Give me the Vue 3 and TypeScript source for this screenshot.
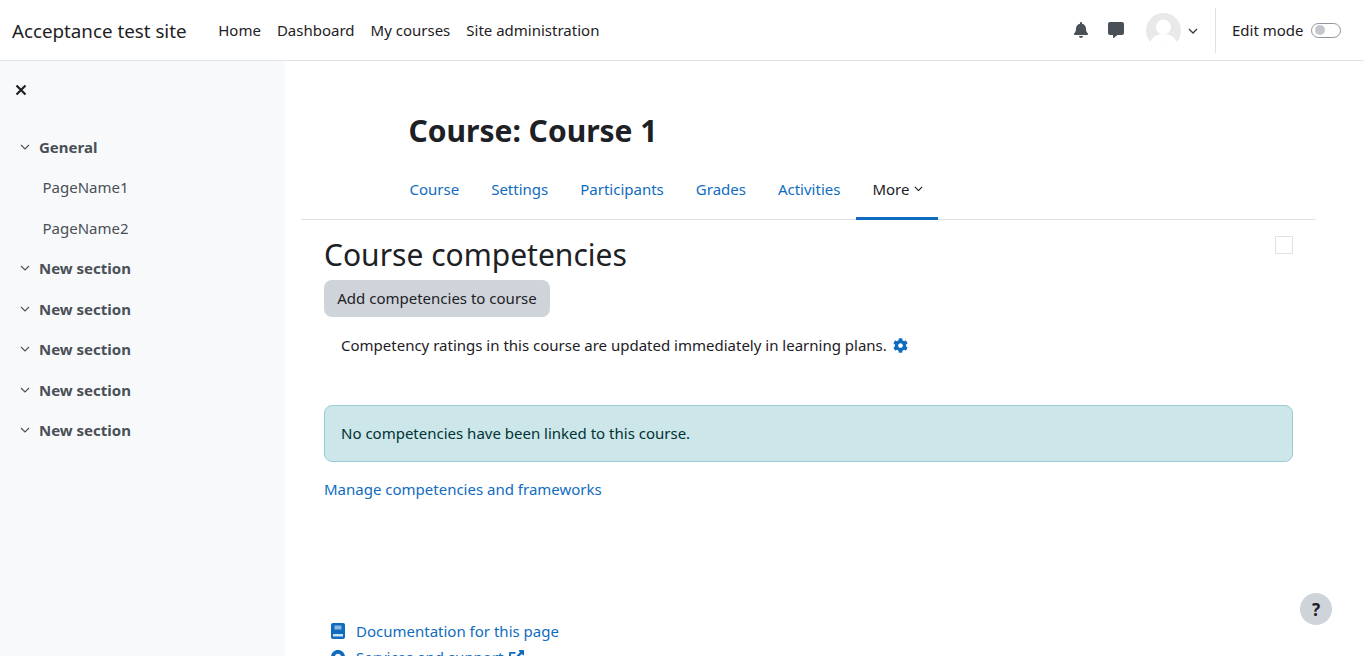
<template>
  <div class="page">
    <nav class="navbar">
      <span class="brand">Acceptance test site</span>
      <ul class="primary">
        <li v-for="item in primaryNav" :key="item">{{ item }}</li>
      </ul>
      <div class="usernav">
        <svg class="nav-icon bell" viewBox="0 0 448 512"><path fill="#495057" d="M224 512c35.3 0 64-28.7 64-64H160c0 35.3 28.7 64 64 64zm215.4-149.7c-19.3-20.8-55.5-52-55.5-154.3 0-77.700-54.500-139.900-127.900-155.200V32c0-17.700-14.300-32-32-32s-32 14.300-32 32v20.800C118.600 68.100 64.100 130.300 64.100 208c0 102.300-36.200 133.500-55.500 154.300-6 6.500-8.700 14.200-8.600 21.700.100 16.400 13 32 32.100 32h383.800c19.100 0 32-15.600 32.100-32 .100-7.500-2.600-15.300-8.600-21.700z"/></svg>
        <svg class="nav-icon chat" viewBox="0 0 512 512"><path fill="#495057" d="M448 0H64C28.700 0 0 28.700 0 64v288c0 35.300 28.700 64 64 64h96v84c0 9.800 11.200 15.500 19.100 9.700L304 416h144c35.300 0 64-28.700 64-64V64c0-35.300-28.700-64-64-64z"/></svg>
        <svg class="avatar" viewBox="0 0 35 35">
          <circle cx="17.500" cy="17.500" r="17.500" fill="#e9e9e9" />
          <circle cx="17.500" cy="14" r="7.500" fill="#fff" />
          <path fill="#fff" d="M4 30c2-6 7-9 13.500-9S29 24 31 30c-3.500 3.500-8.200 5-13.500 5S7.500 33.500 4 30z" />
        </svg>
        <svg class="chev user-chev" viewBox="0 0 10 6"><path d="M1 1l4 4 4-4" fill="none" stroke="#343a40" stroke-width="1.300" /></svg>
        <div class="divider"></div>
        <span class="edit-label">Edit mode</span>
        <span class="switch"><span class="knob"></span></span>
      </div>
    </nav>

    <div class="layout">
      <aside class="drawer">
        <svg class="close" viewBox="0 0 12 12"><path d="M1.500 1.500l9 9M10.500 1.500l-9 9" stroke="#1d2125" stroke-width="2.200" fill="none" /></svg>
        <ul class="index">
          <template v-for="section in sections" :key="section.id">
            <li class="section">
              <svg class="chev" viewBox="0 0 10 6"><path d="M1 1l4 4 4-4" fill="none" stroke="#495057" stroke-width="1.100" /></svg>
              {{ section.name }}
            </li>
            <li v-for="page in section.pages" :key="page" class="page-link">{{ page }}</li>
          </template>
        </ul>
      </aside>

      <main class="main">
        <h1 class="course-title">Course: Course 1</h1>
        <ul class="tabs">
          <li v-for="tab in tabs" :key="tab">{{ tab }}</li>
          <li class="active">
            More
            <svg class="chev more-chev" viewBox="0 0 10 6"><path d="M1 1l4 4 4-4" fill="none" stroke="#1d2125" stroke-width="1.300" /></svg>
          </li>
        </ul>

        <section class="content">
          <span class="block-check"></span>
          <h2 class="heading">Course competencies</h2>
          <button class="btn">Add competencies to course</button>
          <p class="ratings">
            Competency ratings in this course are updated immediately in learning plans.
            <svg class="cog" viewBox="0 0 512 512"><path fill="#0f6cbf" d="M487.400 315.700l-42.600-24.600c4.300-23.200 4.300-47 0-70.200l42.600-24.600c4.900-2.800 7.100-8.600 5.500-14-11.100-35.600-30-67.800-54.700-94.600-3.800-4.100-10-5.100-14.800-2.300L380.800 110c-17.900-15.400-38.500-27.300-60.800-35.100V25.800c0-5.600-3.900-10.500-9.400-11.700-36.700-8.200-74.300-7.800-109.200 0-5.500 1.200-9.400 6.100-9.400 11.700V75c-22.200 7.900-42.800 19.800-60.800 35.100L88.700 85.500c-4.900-2.800-11-1.900-14.800 2.300-24.700 26.700-43.600 58.900-54.700 94.600-1.700 5.400.600 11.200 5.500 14L67.300 221c-4.300 23.200-4.300 47 0 70.200l-42.600 24.600c-4.900 2.800-7.100 8.600-5.500 14 11.100 35.600 30 67.800 54.700 94.600 3.800 4.100 10 5.100 14.800 2.300l42.600-24.600c17.900 15.400 38.500 27.300 60.800 35.100v49.200c0 5.600 3.900 10.500 9.400 11.700 36.700 8.200 74.300 7.800 109.200 0 5.500-1.200 9.400-6.100 9.400-11.700v-49.200c22.200-7.900 42.800-19.800 60.800-35.100l42.600 24.600c4.900 2.800 11 1.900 14.800-2.300 24.700-26.700 43.600-58.900 54.700-94.600 1.500-5.500-.700-11.300-5.600-14.100zM256 336c-44.100 0-80-35.900-80-80s35.900-80 80-80 80 35.900 80 80-35.900 80-80 80z"/></svg>
          </p>
          <div class="alert">No competencies have been linked to this course.</div>
          <a class="manage">Manage competencies and frameworks</a>
        </section>

        <footer class="foot">
          <a class="foot-link">
            <svg class="foot-icon" viewBox="0 0 14 16">
              <path fill="#0f6cbf" d="M2 0h10a2 2 0 0 1 2 2v12a2 2 0 0 1-2 2H2a2 2 0 0 1-2-2V2a2 2 0 0 1 2-2z" />
              <rect x="3.500" y="2.500" width="7" height="4" fill="#8dbae0" />
              <rect x="2" y="11" width="10" height="2.500" fill="#cfe2f3" />
            </svg>
            Documentation for this page
          </a>
          <a class="foot-link">
            <svg class="foot-icon" viewBox="0 0 512 512"><path fill="#0f6cbf" d="M256 0C115 0 0 115 0 256v64h140v-64c0-64 52-116 116-116s116 52 116 116v64h140v-64C512 115 397 0 256 0zM120 300v160c0 28 22 52 52 52h168c30 0 52-24 52-52V300H120z"/></svg>
            Services and support
            <svg class="ext" viewBox="0 0 512 512"><path fill="#0f6cbf" d="M432 320h-32a16 16 0 0 0-16 16v112H64V128h144a16 16 0 0 0 16-16V80a16 16 0 0 0-16-16H48a48 48 0 0 0-48 48v352a48 48 0 0 0 48 48h352a48 48 0 0 0 48-48V336a16 16 0 0 0-16-16zM488 0H360c-21.400 0-32 25.900-17 41l35.700 35.700L135 320.400a24 24 0 0 0 0 34.100l22.500 22.500a24 24 0 0 0 34.100 0L435.300 133.300 471 169c15 15 41 4.500 41-17V24a24 24 0 0 0-24-24z"/></svg>
          </a>
        </footer>

        <button class="help">?</button>
      </main>
    </div>
  </div>
</template>

<script setup lang="ts">
interface Section {
  id: number;
  name: string;
  pages: string[];
}

const primaryNav: string[] = ['Home', 'Dashboard', 'My courses', 'Site administration'];
const tabs: string[] = ['Course', 'Settings', 'Participants', 'Grades', 'Activities'];

const sections: Section[] = [
  { id: 1, name: 'General', pages: ['PageName1', 'PageName2'] },
  { id: 2, name: 'New section', pages: [] },
  { id: 3, name: 'New section', pages: [] },
  { id: 4, name: 'New section', pages: [] },
  { id: 5, name: 'New section', pages: [] },
  { id: 6, name: 'New section', pages: [] }
];
</script>

<style>
html,
body {
  margin: 0;
  overflow: hidden;
}
</style>

<style scoped>
.page {
  height: 656px;
  overflow: hidden;
  font-family: 'Noto Sans', sans-serif;
  font-size: 15px;
  line-height: 22.5px;
  color: #1d2125;
  background: #fff;
}

ul {
  list-style: none;
  margin: 0;
  padding: 0;
}

.navbar {
  display: flex;
  align-items: center;
  height: 60px;
  padding: 0 23px 0 12px;
  border-bottom: 1px solid #dee2e6;
}

.brand {
  font-size: 18.750px;
  margin-right: 23.700px;
  margin-top: 2px;
  white-space: nowrap;
}

.primary {
  display: flex;
}

.primary li {
  padding: 0 8px;
}

.usernav {
  display: flex;
  align-items: center;
  margin-left: auto;
}

.nav-icon {
  width: 16px;
  height: 16px;
}

.bell {
  margin-right: 20px;
  width: 14px;
}

.avatar {
  width: 35px;
  height: 35px;
  margin-left: 22px;
  margin-right: 7px;
}

.chev {
  width: 10px;
  height: 6px;
  flex-shrink: 0;
}

.user-chev {
  margin-top: 2px;
}

.divider {
  width: 1px;
  height: 45px;
  background: #dee2e6;
  margin: 0 16px 0 17px;
}

.edit-label {
  margin-right: 7.500px;
}

.switch {
  display: block;
  box-sizing: border-box;
  width: 30px;
  height: 15px;
  border: 1px solid #8f959e;
  border-radius: 8px;
  padding: 1.500px 0 0 2.500px;
}

.knob {
  display: block;
  width: 10px;
  height: 10px;
  border-radius: 50%;
  background: #c4c8cc;
}

.layout {
  display: flex;
  height: 595px;
}

.drawer {
  width: 285px;
  flex-shrink: 0;
  box-sizing: border-box;
  padding: 23px 0 0 15px;
  background: #f8f9fa;
}

.close {
  display: block;
  width: 12px;
  height: 12px;
}

.index {
  margin-top: 30.500px;
  color: #495057;
}

.section,
.page-link {
  height: 40.500px;
  display: flex;
  align-items: center;
}

.section {
  font-weight: 700;
  padding-left: 5px;
}

.section .chev {
  margin-right: 9px;
}

.page-link {
  padding-left: 27.500px;
}

.main {
  position: relative;
  flex: 1;
  min-width: 0;
  padding: 0 48px 0 16px;
}

.course-title {
  margin: 0;
  padding: 52px 0 0 107.500px;
  font-size: 30px;
  line-height: 36px;
  font-weight: 700;
}

.tabs {
  display: flex;
  margin-top: 10px;
  padding-left: 92.500px;
  border-bottom: 1px solid #dee2e6;
  color: #0f6cbf;
}

.tabs li {
  display: flex;
  align-items: center;
  height: 60px;
  box-sizing: border-box;
  padding: 0 16px;
  white-space: nowrap;
}

.tabs .active {
  color: #1d2125;
  border-bottom: 3px solid #0f6cbf;
  padding-top: 3px;
  padding-right: 15.500px;
  margin-bottom: -1px;
  height: 61px;
}

.more-chev {
  width: 9px;
  height: 5.500px;
  margin: -2px 0 0 4.500px;
}

.content {
  position: relative;
  padding: 17px 23px 0;
}

.block-check {
  position: absolute;
  top: 16px;
  right: 23px;
  box-sizing: border-box;
  width: 18px;
  height: 18px;
  border: 1px solid #dee2e6;
}

.heading {
  margin: 0;
  font-size: 30px;
  line-height: 36px;
  font-weight: 400;
}

.btn {
  display: block;
  margin-top: 7px;
  width: 226px;
  height: 37px;
  padding: 0;
  border: 0;
  border-radius: 8px;
  background: #ced4da;
  color: #1d2125;
  font: inherit;
}

.ratings {
  display: flex;
  align-items: center;
  gap: 6.500px;
  margin: 17px 0 0;
  padding-left: 17px;
}

.cog {
  width: 15px;
  height: 15px;
}

.alert {
  box-sizing: border-box;
  height: 57px;
  margin-top: 48px;
  padding: 16px 16px 0;
  border: 1px solid #98cfd7;
  border-radius: 8px;
  background: #cce6ea;
  color: #033;
}

.manage {
  display: block;
  margin-top: 16px;
  color: #0f6cbf;
}

.foot {
  padding: 118px 0 0 30px;
}

.foot-link {
  display: flex;
  align-items: center;
  height: 26px;
  color: #0f6cbf;
}

.foot-icon {
  width: 14px;
  height: 16px;
  margin-right: 11px;
}

.ext {
  width: 15px;
  height: 15px;
  margin-left: 5px;
}

.help {
  position: absolute;
  right: 32px;
  top: 532px;
  width: 32px;
  height: 32px;
  padding: 0;
  border: 0;
  border-radius: 50%;
  background: #ced4da;
  color: #1d2125;
  font: 700 17px 'Noto Sans', sans-serif;
}
</style>
